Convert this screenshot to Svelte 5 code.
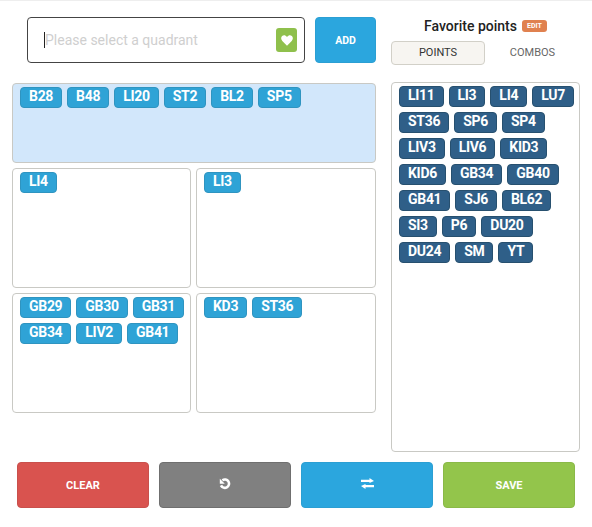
<script lang="ts">
  const quadrants = [
    ["B28", "B48", "LI20", "ST2", "BL2", "SP5"],
    ["LI4"],
    ["LI3"],
    ["GB29", "GB30", "GB31", "GB34", "LIV2", "GB41"],
    ["KD3", "ST36"],
  ];
  const favorites = [
    "LI11", "LI3", "LI4", "LU7", "ST36", "SP6", "SP4", "LIV3", "LIV6", "KID3", "KID6",
    "GB34", "GB40", "GB41", "SJ6", "BL62", "SI3", "P6", "DU20", "DU24", "SM", "YT",
  ];
</script>

<div class="page">
  <div class="main">
    <div class="left">
      <div class="entry">
        <div class="input-box">
          <span class="caret"></span>
          <span class="placeholder">Please select a quadrant</span>
          <span class="heart-btn">
            <svg width="12" height="11" viewBox="0 0 24 22"><path d="M12 21.500 2.600 12C-.4 9-.4 4.600 2.300 2.200 5-.2 9.200.3 12 4c2.800-3.700 7-4.200 9.700-1.800 2.700 2.400 2.700 6.800-.3 9.800z" fill="#fff" /></svg>
          </span>
        </div>
        <button class="add">ADD</button>
      </div>
      <div class="quadrants">
        {#each quadrants as points, i}
          <div class="quad" class:active={i === 0}>
            {#each points as p}
              <span class="chip">{p}</span>
            {/each}
          </div>
        {/each}
      </div>
    </div>
    <div class="right">
      <div class="fav-title">
        <span>Favorite points</span>
        <span class="edit">EDIT</span>
      </div>
      <div class="tabs">
        <span class="tab selected">POINTS</span>
        <span class="tab">COMBOS</span>
      </div>
      <div class="fav-list">
        {#each favorites as p}
          <span class="chip dark">{p}</span>
        {/each}
      </div>
    </div>
  </div>
  <div class="actions">
    <button class="red">CLEAR</button>
    <button class="grey" aria-label="Undo">
      <svg width="12" height="12" viewBox="0 0 12 12" fill="none">
        <path d="M3.400 2.200A4.200 4.200 0 1 1 2 7.400" stroke="#fff" stroke-width="2.600" />
        <path d="M.8 .8v5h5z" fill="#fff" />
      </svg>
    </button>
    <button class="blue" aria-label="Swap">
      <svg width="13" height="11" viewBox="0 0 13 11" fill="#fff">
        <path d="M0 1.700h8.500V0L13 3 8.500 5V4H0z" />
        <path d="M13 9.300H4.500V11L0 8l4.500-2v1h8.500z" />
      </svg>
    </button>
    <button class="green">SAVE</button>
  </div>
</div>

<style>
  :global(body) {
    margin: 0;
    background: #fff;
    font-family: Roboto, "Liberation Sans", sans-serif;
  }

  .page {
    width: 592px;
    height: 527px;
    box-sizing: border-box;
    border-top: 1px solid #eeeeee;
    overflow: hidden;
  }

  .main {
    display: flex;
    gap: 15px;
    padding-left: 12px;
  }

  .left {
    width: 364px;
  }

  .entry {
    display: flex;
    gap: 10px;
    padding: 16px 0 20px 15px;
  }

  .input-box {
    flex: 1;
    height: 46px;
    box-sizing: border-box;
    border: 1px solid #444;
    border-radius: 4px;
    display: flex;
    align-items: center;
    padding: 0 7px 0 16px;
  }

  .caret {
    width: 1px;
    height: 16px;
    background: #222;
  }

  .placeholder {
    flex: 1;
    color: #cfcfcf;
    font-size: 14px;
  }

  .heart-btn {
    width: 21px;
    height: 24px;
    border-radius: 3px;
    background: #8fc04c;
    display: flex;
    align-items: center;
    justify-content: center;
  }

  button {
    border: 1px solid transparent;
    border-radius: 4px;
    color: #fff;
    font-family: inherit;
    font-size: 10.500px;
    font-weight: 700;
    padding: 0;
  }

  .add {
    width: 61px;
    height: 46px;
    background: #2ba6de;
    border-color: #2b9fd3;
  }

  .quadrants {
    display: grid;
    grid-template-columns: 179px 180px;
    grid-template-rows: 80px 120px 120px;
    gap: 5px;
  }

  .quad {
    box-sizing: border-box;
    border: 1px solid #c9c9c4;
    border-radius: 4px;
    padding: 3px 4px 3px 7px;
    display: flex;
    flex-wrap: wrap;
    align-content: flex-start;
    gap: 5px;
  }

  .quad.active {
    grid-column: 1 / span 2;
    background: #d2e7fb;
  }

  .chip {
    height: 21px;
    box-sizing: border-box;
    padding: 0 8px;
    border: 1px solid #2f94c0;
    border-radius: 4px;
    background: #2fa3d6;
    color: #fff;
    font-size: 14px;
    font-weight: 700;
    letter-spacing: -0.3px;
    line-height: 17px;
  }

  .chip.dark {
    background: #2f5f88;
    border-color: #27506f;
  }

  .right {
    width: 189px;
  }

  .fav-title {
    display: flex;
    align-items: center;
    justify-content: center;
    gap: 5px;
    height: 20px;
    margin: 15px 0 5px 0;
    font-size: 14px;
    font-weight: 500;
    color: #222;
  }

  .edit {
    width: 25px;
    height: 12px;
    border-radius: 3px;
    background: #e0814f;
    color: #fff;
    font-size: 7px;
    font-weight: 700;
    line-height: 12px;
    text-align: center;
  }

  .tabs {
    display: flex;
    margin-bottom: 17px;
  }

  .tab {
    flex: 1;
    height: 24px;
    box-sizing: border-box;
    text-align: center;
    font-size: 11px;
    line-height: 22px;
    color: #666;
    border: 1px solid transparent;
  }

  .tab.selected {
    flex: none;
    width: 94px;
    background: #f7f5f1;
    border-color: #d2d0c8;
    border-radius: 4px;
    color: #333;
  }

  .fav-list {
    height: 370px;
    box-sizing: border-box;
    border: 1px solid #c9c9c4;
    border-radius: 4px;
    padding: 3px 4px 3px 7px;
    display: flex;
    flex-wrap: wrap;
    align-content: flex-start;
    gap: 5px;
  }

  .actions {
    display: flex;
    gap: 10px;
    padding: 10px 0 0 17px;
  }

  .actions button {
    width: 132px;
    height: 46px;
    font-size: 11px;
  }

  .red {
    background: #d9534f;
    border-color: #c9504c;
  }

  .grey {
    background: #808080;
    border-color: #6f6f6f;
  }

  .blue {
    background: #2ba6de;
    border-color: #2b9fd3;
  }

  .green {
    background: #93c54b;
    border-color: #8ab948;
  }
</style>
